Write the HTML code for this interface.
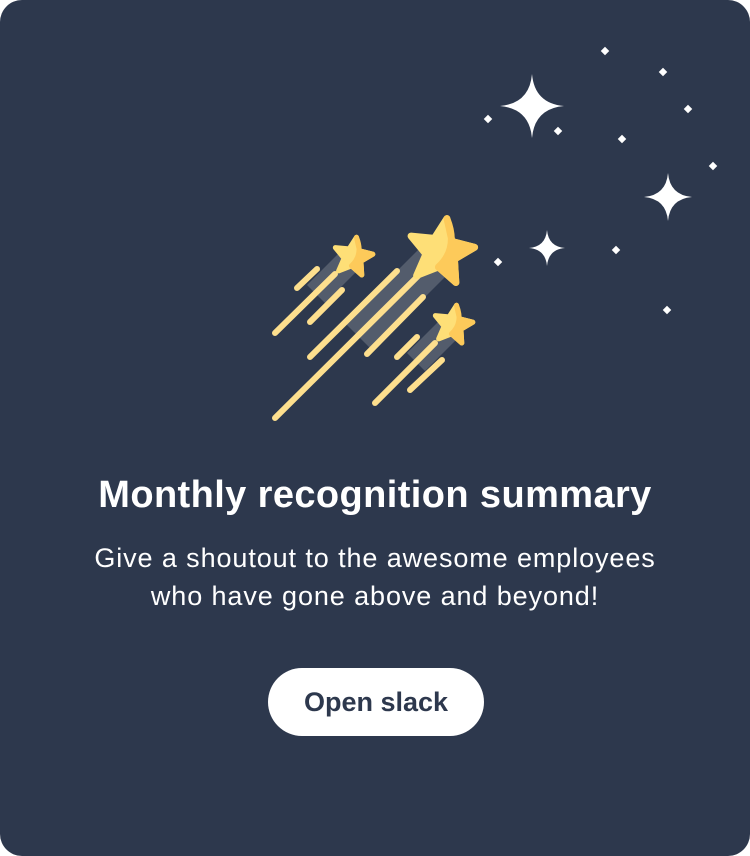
<!DOCTYPE html>
<html><head><meta charset="utf-8"><style>
html,body{margin:0;padding:0;background:#fff;}
.card{position:relative;width:750px;height:856px;background:#2d384d;border-radius:22px;overflow:hidden;font-family:"Liberation Sans",Roboto,sans-serif;color:#fff;}
h1{position:absolute;left:0;right:0;top:474px;margin:0;text-align:center;font-size:38px;font-weight:700;letter-spacing:0.4px;}
p{position:absolute;left:0;right:0;top:539px;margin:0;text-align:center;font-size:27px;line-height:38px;letter-spacing:0.9px;}
.btn{position:absolute;left:268px;top:668px;width:216px;height:68px;border-radius:34px;background:#fff;color:#2d384d;font-size:27px;font-weight:700;text-align:center;line-height:68px;}
svg{position:absolute;left:0;top:0;}
</style></head><body>
<div class="card">
<svg width="750" height="460" viewBox="0 0 750 460">
<defs>
<path id="st" d="M0,-1 L0.265,-0.364 L0.951,-0.309 L0.428,0.139 L0.588,0.809 L0,0.45 L-0.588,0.809 L-0.428,0.139 L-0.951,-0.309 L-0.265,-0.364Z"/>
<path id="sh" d="M0,0.45 L0.588,0.809 L0.428,0.139 L0.951,-0.309 L0.265,-0.364 L0,-1 Q0.5,-0.2 0,0.45Z"/>
<path id="sp" d="M0,-1 Q0.08,-0.08 1,0 Q0.08,0.08 0,1 Q-0.08,0.08 -1,0 Q-0.08,-0.08 0,-1Z"/>
</defs>
<g fill="#535c6c">
<polygon points="418,250 445,277 372,350 345,323"/>
<polygon points="340,252 358,270 325,303 307,285"/>
<polygon points="442,318 460,336 425,371 407,353"/>
</g>
<g stroke="#fddf8e" stroke-width="6" stroke-linecap="round">
<line x1="275" y1="418" x2="418" y2="276"/>
<line x1="310" y1="357" x2="397" y2="271"/>
<line x1="367" y1="354" x2="423" y2="297"/>
<line x1="297" y1="288" x2="317" y2="269"/>
<line x1="275" y1="333" x2="335" y2="274"/>
<line x1="310" y1="322" x2="342" y2="290"/>
<line x1="397" y1="357" x2="417" y2="337"/>
<line x1="375" y1="403" x2="435" y2="343"/>
<line x1="410" y1="390" x2="442" y2="360"/>
</g>
<g fill="#fedf77" stroke="#fedf77" stroke-linejoin="round">
<use href="#st" transform="translate(441,252) rotate(10) scale(34)" stroke-width="0.2"/>
<use href="#st" transform="translate(353,257) rotate(10) scale(20)" stroke-width="0.25"/>
<use href="#st" transform="translate(453,325) rotate(10) scale(20)" stroke-width="0.25"/>
</g>
<g fill="#fdca5a" stroke="#fdca5a" stroke-linejoin="round">
<use href="#sh" transform="translate(441,252) rotate(10) scale(34)" stroke-width="0.2"/>
<use href="#sh" transform="translate(353,257) rotate(10) scale(20)" stroke-width="0.25"/>
<use href="#sh" transform="translate(453,325) rotate(10) scale(20)" stroke-width="0.25"/>
</g>
<g fill="#fff">
<use href="#sp" transform="translate(532,106) scale(32)"/>
<use href="#sp" transform="translate(668,197) scale(24)"/>
<use href="#sp" transform="translate(547,248) scale(18)"/>
<rect x="602" y="48" width="6" height="6" transform="rotate(45 605 51)"/>
<rect x="660" y="69" width="6" height="6" transform="rotate(45 663 72)"/>
<rect x="685" y="106" width="6" height="6" transform="rotate(45 688 109)"/>
<rect x="619" y="136" width="6" height="6" transform="rotate(45 622 139)"/>
<rect x="555" y="128" width="6" height="6" transform="rotate(45 558 131)"/>
<rect x="485" y="116" width="6" height="6" transform="rotate(45 488 119)"/>
<rect x="710" y="163" width="6" height="6" transform="rotate(45 713 166)"/>
<rect x="613" y="247" width="6" height="6" transform="rotate(45 616 250)"/>
<rect x="495" y="259" width="6" height="6" transform="rotate(45 498 262)"/>
<rect x="664" y="307" width="6" height="6" transform="rotate(45 667 310)"/>
</g>
</svg>
<h1>Monthly recognition summary</h1>
<p>Give a shoutout to the awesome employees<br>who have gone above and beyond!</p>
<div class="btn">Open slack</div>
</div>
</body></html>
